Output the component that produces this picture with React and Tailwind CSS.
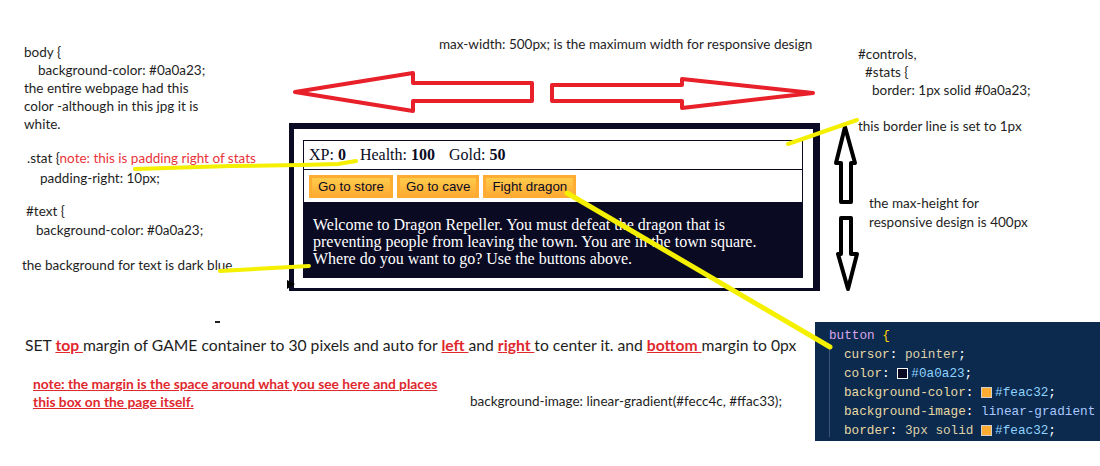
import React from 'react'

const note = "font-['Lato','Liberation_Sans',sans-serif] text-[13.5px] leading-[18px] text-[#1e1e1e]"

function Stat({ label, value }) {
  return (
    <span className="pr-[10px]">
      {label}: <strong>{value}</strong>
    </span>
  )
}

function GameBox() {
  return (
    <div className="absolute left-[289px] top-[123px] w-[531px] h-[168px] bg-white border-[#0a0a23] border-t-[6px] border-l-[5px] border-r-[7px] border-b-[3px] pt-[11px] pl-[9px]">
      <div className="w-[500px] font-['Liberation_Serif',serif] text-[16px]">
        <div className="border border-[#0a0a23] px-[5px] h-[30px] leading-[28px] text-[#0a0a23]">
          <Stat label="XP" value="0" /> <Stat label="Health" value="100" /> <Stat label="Gold" value="50" />
        </div>
        <div className="border border-t-0 border-[#0a0a23] px-[5px] pt-[5px] pb-[4px] flex gap-[4px]">
          {['Go to store', 'Go to cave', 'Fight dragon'].map((b) => (
            <button
              key={b}
              className="font-['Liberation_Sans',sans-serif] text-[13.33px] leading-[15px] px-[6px] py-[1px] text-[#0a0a23] bg-[#feac32] bg-linear-to-b from-[#fecc4c] to-[#ffac33] border-[3px] border-[#feac32]"
            >
              {b}
            </button>
          ))}
        </div>
        <div className="bg-[#0a0a23] text-white px-[10px] pt-[13px] leading-[17px] h-[75px]">
          Welcome to Dragon Repeller. You must defeat the dragon that is preventing people from leaving the town. You are in the town square. Where do you want to go? Use the buttons above.
        </div>
      </div>
    </div>
  )
}

function CodeBox() {
  const prop = 'text-[#e8d9a4]'
  const val = 'text-[#ddd0a8]'
  const hex = 'text-[#8fd4ff]'
  return (
    <div className="absolute left-[815px] top-[322px] w-[285px] h-[119px] bg-[#0c2a4e] pt-[4px] pl-[14px] font-['Liberation_Mono',monospace] text-[12.7px] leading-[19px] whitespace-pre overflow-hidden">
      <div className="absolute left-[14px] top-[23px] bottom-[4px] w-px bg-[#3c5576]" />
      <div>
        <span className="text-[#d8a6ec]">button</span> <span className="text-[#ffd700]">{'{'}</span>
      </div>
      <div className="pl-[15px]">
        <span className={prop}>cursor</span><span className="text-white">: </span><span className={val}>pointer</span><span className="text-white">;</span>
      </div>
      <div className="pl-[15px] flex items-center">
        <span className={prop}>color</span><span className="text-white">: </span>
        <span className="inline-block w-[11px] h-[11px] bg-[#0a0a23] border border-white mr-[3px]" />
        <span className={hex}>#0a0a23</span><span className="text-white">;</span>
      </div>
      <div className="pl-[15px] flex items-center">
        <span className={prop}>background-color</span><span className="text-white">: </span>
        <span className="inline-block w-[11px] h-[11px] bg-[#feac32] border border-[#d0d0d0] mr-[3px]" />
        <span className={hex}>#feac32</span><span className="text-white">;</span>
      </div>
      <div className="pl-[15px]">
        <span className={prop}>background-image</span><span className="text-white">: </span><span className="text-[#a8c8ff]">linear-gradient</span>
      </div>
      <div className="pl-[15px] flex items-center">
        <span className={prop}>border</span><span className="text-white">: </span><span className={val}>3px solid </span>
        <span className="inline-block w-[11px] h-[11px] bg-[#feac32] border border-[#d0d0d0] mr-[3px]" />
        <span className={hex}>#feac32</span><span className="text-white">;</span>
      </div>
    </div>
  )
}

function Drawings() {
  return (
    <svg className="absolute inset-0 pointer-events-none" width="1100" height="466" viewBox="0 0 1100 466">
      {/* red width arrows */}
      <polygon points="295,92 413,73 413,83 532,83 532,101 413,101 413,111" fill="white" stroke="#e8202a" strokeWidth="4" strokeLinejoin="round" />
      <polygon points="552,85 682,85 682,79 813,93 682,108 682,101 552,101" fill="white" stroke="#e8202a" strokeWidth="4" strokeLinejoin="round" />
      {/* black height arrows */}
      <polygon points="845,127 855,163 851,163 851,202 841,202 841,163 836,163" fill="white" stroke="black" strokeWidth="4" strokeLinejoin="round" />
      <polygon points="841,218 851,218 851,254 857,254 848,289 838,254 841,254" fill="white" stroke="black" strokeWidth="4" strokeLinejoin="round" />
      {/* small marks */}
      <polygon points="287,280 295,284 287,289" fill="black" />
      <rect x="215" y="321" width="5" height="2" fill="#222" />
      {/* yellow pointer lines */}
      <g stroke="#f4f000" strokeWidth="4" strokeLinecap="round" fill="none">
        <polyline points="135,169 230,166 300,165 338,164 356,161" />
        <line x1="220" y1="271" x2="309" y2="266" />
        <line x1="788" y1="144" x2="857" y2="120" />
        <line x1="567" y1="193" x2="830" y2="347" strokeWidth="5" />
      </g>
    </svg>
  )
}

export default function App() {
  return (
    <div className="relative w-[1100px] h-[466px] bg-white overflow-hidden">
      <div className={`absolute left-[24px] top-[43px] ${note}`}>
        <div>body {'{'}</div>
        <div className="pl-[14px]">background-color: #0a0a23;</div>
        <div>the entire webpage had this</div>
        <div>color -although in this jpg it is</div>
        <div>white.</div>
      </div>

      <div className={`absolute left-[27px] top-[149px] ${note}`}>
        <div>
          .stat {'{'}<span className="text-[#e8343c]">note: this is padding right of stats</span>
        </div>
        <div className="pl-[13px] pt-[2px]">padding-right: 10px;</div>
      </div>

      <div className={`absolute left-[26px] top-[202px] ${note}`}>
        <div>#text {'{'}</div>
        <div className="pl-[10px] pt-[1px]">background-color: #0a0a23;</div>
      </div>

      <div className={`absolute left-[22px] top-[256px] ${note}`}>the background for text is dark blue</div>

      <div className={`absolute left-[439px] top-[35px] ${note}`}>
        max-width: 500px; is the maximum width for responsive design
      </div>

      <div className={`absolute left-[858px] top-[45px] ${note}`}>
        <div>#controls,</div>
        <div className="pl-[7px]">#stats {'{'}</div>
        <div className="pl-[14px]">border: 1px solid #0a0a23;</div>
      </div>

      <div className={`absolute left-[858px] top-[117px] ${note}`}>this border line is set to 1px</div>

      <div className={`absolute left-[869px] top-[194px] ${note}`}>
        <div>the max-height for</div>
        <div className="pt-[1px]">responsive design is 400px</div>
      </div>

      <GameBox />

      <div className="absolute left-[25px] top-[335px] font-['Lato','Liberation_Sans',sans-serif] text-[15.7px] leading-[20px] text-[#1e1e1e]">
        SET <span className="text-[#e0282e] font-bold underline">top </span>margin of GAME container to 30 pixels and auto for{' '}
        <span className="text-[#e0282e] font-bold underline">left </span>and{' '}
        <span className="text-[#e0282e] font-bold underline">right </span>to center it. and{' '}
        <span className="text-[#e0282e] font-bold underline">bottom </span>margin to 0px
      </div>

      <div className="absolute left-[33px] top-[375px] font-['Lato','Liberation_Sans',sans-serif] text-[13.8px] leading-[18px] font-bold text-[#e0282e] underline">
        <div>note: the margin is the space around what you see here and places</div>
        <div>this box on the page itself.</div>
      </div>

      <div className={`absolute left-[470px] top-[392px] ${note} text-[12.6px]`}>
        background-image: linear-gradient(#fecc4c, #ffac33);
      </div>

      <CodeBox />
      <Drawings />
    </div>
  )
}
